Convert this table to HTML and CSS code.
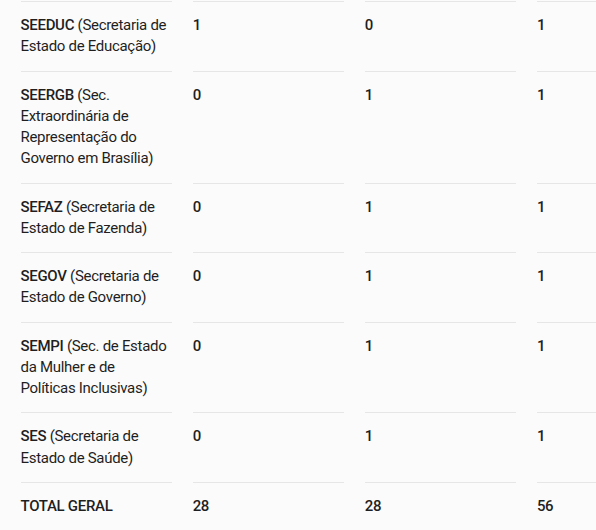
FILE: index.html
```html
<!DOCTYPE html>
<html lang="pt-BR">
  <head>
    <meta charset="utf-8" />
    <title>Tabela de secretarias</title>
    <link rel="stylesheet" href="styles.css">
  </head>
  <body>
    <div class="tableWrap">
      <table class="dataTable">
        <tbody>
          <tr>
            <td class="dataTable__name"><strong>SEEDUC</strong> (Secretaria de Estado de Educação)</td>
            <td class="dataTable__num">1</td>
            <td class="dataTable__num">0</td>
            <td class="dataTable__num">1</td>
          </tr>
          <tr>
            <td class="dataTable__name"><strong>SEERGB</strong> (Sec. Extraordinária de Representação do Governo em Brasília)</td>
            <td class="dataTable__num">0</td>
            <td class="dataTable__num">1</td>
            <td class="dataTable__num">1</td>
          </tr>
          <tr>
            <td class="dataTable__name"><strong>SEFAZ</strong> (Secretaria de Estado de Fazenda)</td>
            <td class="dataTable__num">0</td>
            <td class="dataTable__num">1</td>
            <td class="dataTable__num">1</td>
          </tr>
          <tr>
            <td class="dataTable__name"><strong>SEGOV</strong> (Secretaria de Estado de Governo)</td>
            <td class="dataTable__num">0</td>
            <td class="dataTable__num">1</td>
            <td class="dataTable__num">1</td>
          </tr>
          <tr>
            <td class="dataTable__name"><strong>SEMPI</strong> (Sec. de Estado da Mulher e de Políticas Inclusivas)</td>
            <td class="dataTable__num">0</td>
            <td class="dataTable__num">1</td>
            <td class="dataTable__num">1</td>
          </tr>
          <tr>
            <td class="dataTable__name"><strong>SES</strong> (Secretaria de Estado de Saúde)</td>
            <td class="dataTable__num">0</td>
            <td class="dataTable__num">1</td>
            <td class="dataTable__num">1</td>
          </tr>
          <tr class="dataTable__total">
            <td class="dataTable__name"><strong>TOTAL GERAL</strong></td>
            <td class="dataTable__num">28</td>
            <td class="dataTable__num">28</td>
            <td class="dataTable__num">56</td>
          </tr>
        </tbody>
      </table>
    </div>
  </body>
</html>
```

FILE: styles.css
```css
html, body {
  margin: 0;
  padding: 0;
  background-color: #fbfbfb;
}

body {
  font-family: Roboto, "Open Sans", sans-serif;
  font-size: 15px;
  letter-spacing: -0.3px;
  color: #1f1f1f;
}

.tableWrap {
  overflow: hidden;
  width: 596px;
  padding-top: 1px;
}

.dataTable {
  border-collapse: separate;
  border-spacing: 21.5px 0;
  table-layout: fixed;
  width: 709.5px;
  margin-left: -0.5px;
}

.dataTable td {
  width: 150px;
  vertical-align: top;
  text-align: left;
  line-height: 21.25px;
  padding: 13px 0;
  border-bottom: 1px solid #e6e6e6;
}

.dataTable tr:first-child td {
  border-top: 1px solid #e6e6e6;
}

.dataTable tr:last-child td {
  border-bottom: none;
}

.dataTable__num {
  font-weight: 500;
}

.dataTable strong {
  font-weight: 500;
}
```
